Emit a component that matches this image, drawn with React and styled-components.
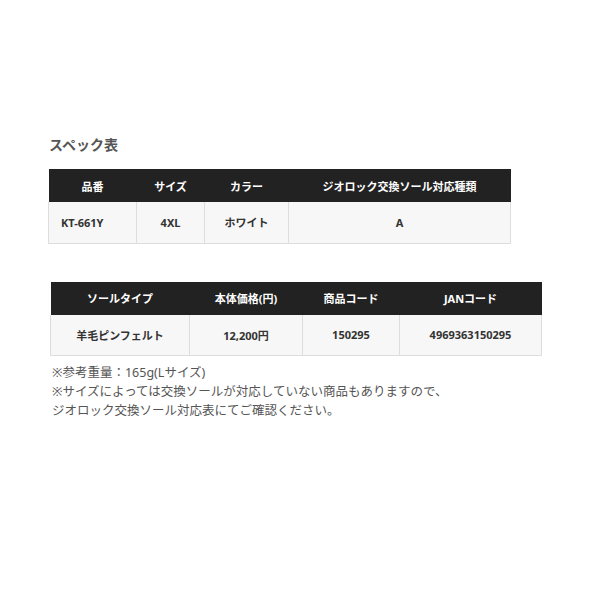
import React from "react";
import styled, { createGlobalStyle } from "styled-components";

const Global = createGlobalStyle`
  html, body { margin: 0; padding: 0; background: #fff; }
  body { font-family: "Noto Sans", "Noto Sans CJK JP", sans-serif; }
`;

const Page = styled.div`
  padding: 135px 0 0 48px;
`;

const Title = styled.h2`
  margin: 0 0 14px 1px;
  font-size: 14px;
  line-height: 20px;
  font-weight: 700;
  color: #555;
`;

const Table = styled.table`
  border-collapse: collapse;
  table-layout: fixed;
  width: ${(p) => p.$width}px;
  margin-left: ${(p) => p.$offset || 0}px;
  margin-bottom: ${(p) => p.$gap || 0}px;
`;

const Th = styled.th`
  background: #222;
  color: #fff;
  font-size: 11px;
  font-weight: 700;
  height: 33px;
  padding: 0 8px;
  text-align: center;
  box-sizing: border-box;
`;

const Td = styled.td`
  background: #f7f7f7;
  color: #333;
  font-size: 11px;
  font-weight: 700;
  height: 41px;
  padding: 0 ${(p) => (p.$left ? "12px" : "8px")};
  text-align: ${(p) => (p.$left ? "left" : "center")};
  border: 1px solid #ddd;
  border-top: none;
  box-sizing: border-box;
`;

const Notes = styled.div`
  margin: 7px 0 0 4px;
  font-size: 12.5px;
  line-height: 19px;
  color: #555;
`;

function Spec({ cols, head, row, width, offset, gap, leftFirst }) {
  return (
    <Table $width={width} $offset={offset} $gap={gap}>
      <colgroup>
        {cols.map((w, i) => (
          <col key={i} style={{ width: w }} />
        ))}
      </colgroup>
      <thead>
        <tr>
          {head.map((h) => (
            <Th key={h}>{h}</Th>
          ))}
        </tr>
      </thead>
      <tbody>
        <tr>
          {row.map((c, i) => (
            <Td key={i} $left={leftFirst && i === 0}>
              {c}
            </Td>
          ))}
        </tr>
      </tbody>
    </Table>
  );
}

export default function App() {
  return (
    <Page>
      <Global />
      <Title>スペック表</Title>
      <Spec
        width={462}
        gap={38}
        cols={[88, 68, 84, 222]}
        head={["品番", "サイズ", "カラー", "ジオロック交換ソール対応種類"]}
        row={["KT-661Y", "4XL", "ホワイト", "A"]}
        leftFirst
      />
      <Spec
        width={491}
        offset={2}
        cols={[139, 113, 97, 142]}
        head={["ソールタイプ", "本体価格(円)", "商品コード", "JANコード"]}
        row={["羊毛ピンフェルト", "12,200円", "150295", "4969363150295"]}
      />
      <Notes>
        ※参考重量：165g(Lサイズ)
        <br />
        ※サイズによっては交換ソールが対応していない商品もありますので、
        <br />
        ジオロック交換ソール対応表にてご確認ください。
      </Notes>
    </Page>
  );
}
